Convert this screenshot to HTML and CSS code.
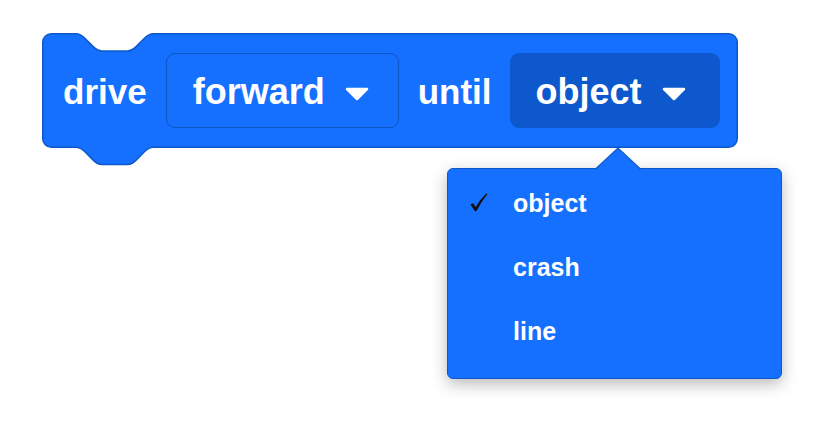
FILE: index.html
```html
<!DOCTYPE html>
<html>
<head>
<meta charset="utf-8">
<link rel="stylesheet" href="styles.css">
</head>
<body>
<div class="stage">
  <div class="block">
    <svg class="block-shape" width="698" height="134" viewBox="0 0 698 134">
      <path d="M0.75,9.25 a8.5,8.5 0 0 1 8.5,-8.5 H34 c4.3,0 6.4,2.1 8.6,4.3 l8.6,8.6 c2.1,2.1 4.3,4.3 8.6,4.3 h25.7 c4.3,0 6.4,-2.1 8.6,-4.3 l8.6,-8.6 c2.1,-2.1 4.3,-4.3 8.6,-4.3 H686.75 a8.5,8.5 0 0 1 8.5,8.5 V105.75 a8.5,8.5 0 0 1 -8.5,8.5 H111.3 c-4.3,0 -6.4,2.1 -8.6,4.3 l-8.6,8.6 c-2.1,2.1 -4.3,4.3 -8.6,4.3 h-25.7 c-4.3,0 -6.4,-2.1 -8.6,-4.3 l-8.6,-8.6 c-2.1,-2.1 -4.3,-4.3 -8.6,-4.3 H9.25 a8.5,8.5 0 0 1 -8.5,-8.5 Z" fill="#1570ff" stroke="#0d59c9" stroke-width="1.5"/>
    </svg>
    <span class="label label-drive">drive</span>
    <div class="field field-forward">
      <span class="field-text">forward</span>
      <svg class="caret" width="24" height="14" viewBox="0 0 24 14"><path d="M2,2 H22 L12,12 Z" fill="#fff" stroke="#fff" stroke-width="2.5" stroke-linejoin="round"/></svg>
    </div>
    <span class="label label-until">until</span>
    <div class="field field-object">
      <span class="field-text">object</span>
      <svg class="caret" width="24" height="14" viewBox="0 0 24 14"><path d="M2,2 H22 L12,12 Z" fill="#fff" stroke="#fff" stroke-width="2.5" stroke-linejoin="round"/></svg>
    </div>
  </div>

  <div class="menu">
    <svg class="menu-arrow" width="48" height="23" viewBox="0 0 48 23">
      <path d="M1,23 L24,1 L47,23 Z" fill="#1570ff"/>
      <path d="M1,22.5 L24,1 L47,22.5" fill="none" stroke="#0d59c9" stroke-width="1.2"/>
    </svg>
    <div class="menu-item">
      <span class="check">
        <svg width="18" height="19" viewBox="0 0 18 19"><path d="M0.5,11.5 Q2,10 3.6,10.6 L5.6,14.2 Q10,6.5 16.2,0.6 Q17.2,0.6 17.2,1.4 Q11.2,8.5 6.8,17.6 Q5.6,18.8 4.4,17.6 Z" fill="#111"/></svg>
      </span>
      <span class="item-text">object</span>
    </div>
    <div class="menu-item">
      <span class="check"></span>
      <span class="item-text">crash</span>
    </div>
    <div class="menu-item">
      <span class="check"></span>
      <span class="item-text">line</span>
    </div>
  </div>
</div>
</body>
</html>
```

FILE: styles.css
```css
html, body {
  margin: 0;
  padding: 0;
  background: #ffffff;
}

.stage {
  position: relative;
  width: 834px;
  height: 434px;
  overflow: hidden;
  font-family: "Liberation Sans", Arial, sans-serif;
}

.block {
  position: relative;
  box-sizing: border-box;
  width: 696px;
  height: 115px;
  margin: 33px 0 0 42px;
  display: flex;
  align-items: center;
  padding: 0 18px 0 21px;
}

.block-shape {
  position: absolute;
  left: 0;
  top: -0.5px;
  z-index: 0;
}

.label,
.field {
  position: relative;
  z-index: 1;
}

.label {
  color: #ffffff;
  font-weight: bold;
  font-size: 35px;
  line-height: 40px;
  margin-top: 2px;
}

.label-drive {
  margin-right: 19px;
}

.label-until {
  margin: 2px 18px 0 19px;
}

.field {
  box-sizing: border-box;
  height: 75px;
  display: flex;
  align-items: center;
  border-radius: 9px;
}

.field-forward {
  width: 233px;
  padding-left: 26px;
  border: 1.5px solid #0c56c4;
  background: #1570ff;
}

.field-object {
  width: 210px;
  padding-left: 26px;
  background: #0d58cc;
}

.field-text {
  color: #ffffff;
  font-weight: bold;
  font-size: 36px;
  line-height: 40px;
  margin-top: 2px;
}

.caret {
  margin-left: 20px;
  margin-top: 7px;
}

.menu {
  position: absolute;
  left: 447px;
  top: 168px;
  box-sizing: border-box;
  width: 335px;
  height: 211px;
  padding: 2px 0 0 0;
  background: #1570ff;
  border: 1px solid #0d59c9;
  border-radius: 6px;
  box-shadow: 0 5px 16px rgba(0, 0, 0, 0.28);
}

.menu-arrow {
  position: absolute;
  left: 146px;
  top: -22px;
}

.menu-item {
  display: flex;
  align-items: center;
  height: 64px;
}

.check {
  box-sizing: border-box;
  width: 65px;
  padding-left: 22px;
  height: 30px;
  display: flex;
  align-items: center;
}

.check svg {
  margin-top: -2px;
}

.item-text {
  color: #ffffff;
  font-weight: bold;
  font-size: 25px;
  line-height: 30px;
}
```
